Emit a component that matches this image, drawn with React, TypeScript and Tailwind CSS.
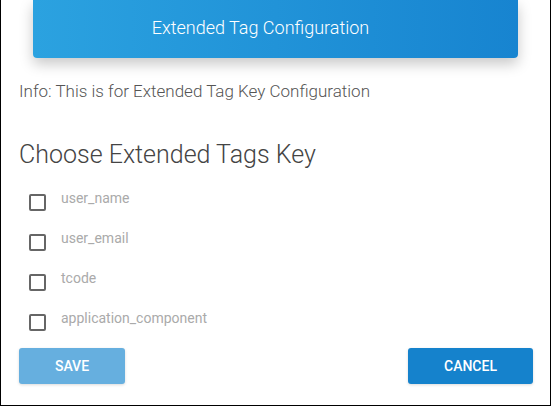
import { useState } from "react";

const TAG_KEYS = ["user_name", "user_email", "tcode", "application_component"];

export default function App() {
  const [checked, setChecked] = useState<Record<string, boolean>>({});

  return (
    <div className="h-[406px] w-[551px] overflow-hidden border-x border-b border-black bg-white font-['Roboto',sans-serif]">
      <div className="px-[32px]">
        <div className="flex h-[58px] items-center justify-center rounded-b-[4px] bg-gradient-to-r from-[#2ba2e0] to-[#1784d0] pb-[4px] pr-[30px] shadow-[0_6px_14px_rgba(0,0,0,0.22)]">
          <span className="text-[18px] font-light text-white">Extended Tag Configuration</span>
        </div>
      </div>

      <div className="px-[18px]">
        <p className="mt-[23px] text-[17px] font-light leading-5 text-[#555]">
          Info: This is for Extended Tag Key Configuration
        </p>

        <h2 className="mt-[40px] text-[25px] font-light leading-7 text-[#444]">
          Choose Extended Tags Key
        </h2>

        <div className="mt-[23px] flex flex-col gap-[22px] pl-[10px]">
          {TAG_KEYS.map((key) => (
            <label key={key} className="flex h-[18px] cursor-pointer items-start gap-[15px]">
              <span
                onClick={() => setChecked((c) => ({ ...c, [key]: !c[key] }))}
                className={`mt-[2px] h-[17px] w-[17px] shrink-0 rounded-[2px] border-2 ${
                  checked[key] ? "border-[#1784d0] bg-[#1784d0]" : "border-[#666]"
                }`}
              />
              <span className="-mt-[2px] text-[14px] leading-4 text-[#aaa]">{key}</span>
            </label>
          ))}
        </div>

        <div className="mt-[18px] mr-[-1px] flex items-center justify-between">
          <button className="flex h-[36px] w-[106px] items-center justify-center rounded-[3px] bg-[#66afdf] text-[14px] font-medium text-white shadow-[0_1px_3px_rgba(0,0,0,0.15)]">
            SAVE
          </button>
          <button className="flex h-[36px] w-[125px] items-center justify-center rounded-[3px] bg-[#1582cc] text-[14px] font-medium text-white shadow-[0_1px_3px_rgba(0,0,0,0.15)]">
            CANCEL
          </button>
        </div>
      </div>
    </div>
  );
}
